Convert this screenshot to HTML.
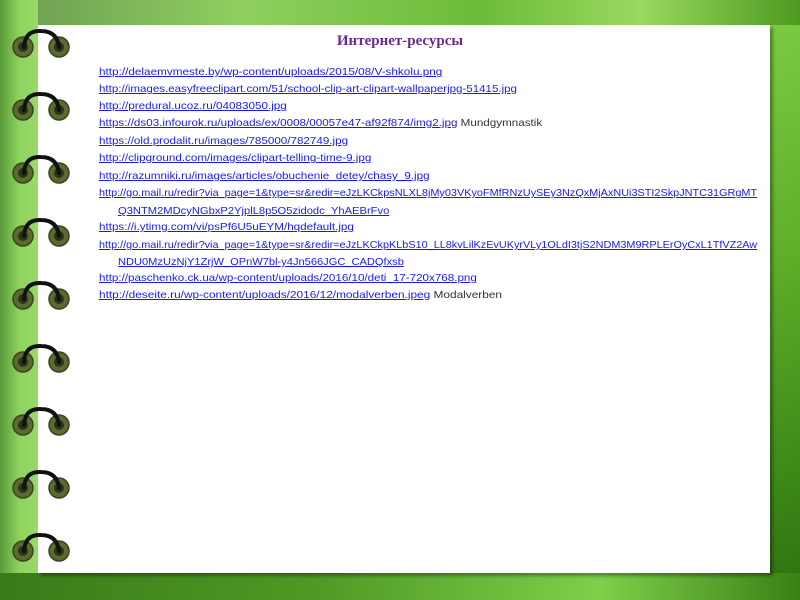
<!DOCTYPE html>
<html><head><meta charset="utf-8"><style>
html,body{margin:0;padding:0}
body{width:800px;height:600px;position:relative;overflow:hidden;
background:linear-gradient(160deg,#6fbf3c 0%,#7fcf45 30%,#5fb02a 60%,#3d8a18 85%,#2f7010 100%);font-family:"Liberation Sans",sans-serif}
.top{position:absolute;left:0;top:0;width:800px;height:25px;background:linear-gradient(90deg,#6a9a50,#8fcf60 30%,#6cbc38 60%,#9ad860 80%,#4e9a20)}
.lside{position:absolute;left:0;top:0;width:38px;height:600px;background:linear-gradient(90deg,#5a9a3a,#8ed35e 50%,#9ad86a)}
.bot{position:absolute;left:0;top:573px;width:800px;height:27px;background:linear-gradient(90deg,#3a7a18,#4f9a25 40%,#7ed04a 75%,#3a8015)}
.page{position:absolute;left:38px;top:25px;width:732px;height:548px;background:#fff;box-shadow:3px 3px 3px rgba(0,0,0,.35)}
.t{position:absolute;left:0;width:800px;top:33px;text-align:center;font:bold 15px "Liberation Serif",serif;color:#6a2a8c}
.l{position:absolute;left:99px;font-size:10.4px;white-space:nowrap;color:#333;transform-origin:0 0;transform:scaleX(1.12)}
.l span.a{color:#1a1aee;text-decoration:underline}
</style></head><body>
<div class="top"></div><div class="lside"></div><div class="bot"></div>
<div class="page"></div>
<svg style="position:absolute;left:0;top:0" width="90" height="600">
<g id="r">
<circle cx="23" cy="47" r="10" fill="#5a6a30" stroke="#3a4520" stroke-width="1.5"/>
<circle cx="23" cy="47" r="5" fill="#2a3515"/>
<circle cx="59" cy="47" r="10" fill="#5a6a30" stroke="#3a4520" stroke-width="1.5"/>
<circle cx="59" cy="47" r="5" fill="#2a3515"/>
<path d="M24 47 Q25 30 41 31 Q57 31 59 47" fill="none" stroke="#111" stroke-width="4" stroke-linecap="round"/>
</g>
<use href="#r" y="63"/><use href="#r" y="126"/><use href="#r" y="189"/><use href="#r" y="252"/><use href="#r" y="315"/><use href="#r" y="378"/><use href="#r" y="441"/><use href="#r" y="504"/>
</svg>
<div class="t">Интернет-ресурсы</div>
<div class="l" style="top:67px;transform:scaleX(1.13)"><span class="a">http://delaemvmeste.by/wp-content/uploads/2015/08/V-shkolu.png</span></div>
<div class="l" style="top:84px;transform:scaleX(1.11)"><span class="a">http://images.easyfreeclipart.com/51/school-clip-art-clipart-wallpaperjpg-51415.jpg</span></div>
<div class="l" style="top:101px;transform:scaleX(1.125)"><span class="a">http://predural.ucoz.ru/04083050.jpg</span></div>
<div class="l" style="top:118px"><span class="a">https://ds03.infourok.ru/uploads/ex/0008/00057e47-af92f874/img2.jpg</span> Mundgymnastik</div>
<div class="l" style="top:136px"><span class="a">https://old.prodalit.ru/images/785000/782749.jpg</span></div>
<div class="l" style="top:153px"><span class="a">http://clipground.com/images/clipart-telling-time-9.jpg</span></div>
<div class="l" style="top:171px"><span class="a">http://razumniki.ru/images/articles/obuchenie_detey/chasy_9.jpg</span></div>
<div class="l" style="top:188px;transform:scaleX(1.046)"><span class="a">http://go.mail.ru/redir?via_page=1&amp;type=sr&amp;redir=eJzLKCkpsNLXL8jMy03VKyoFMfRNzUySEy3NzQxMjAxNUi3STI2SkpJNTC31GRgMT</span></div>
<div class="l" style="top:206px;left:118px;transform:scaleX(1.075)"><span class="a">Q3NTM2MDcyNGbxP2YjplL8p5O5zidodc_YhAEBrFvo</span></div>
<div class="l" style="top:222px"><span class="a">https://i.ytimg.com/vi/psPf6U5uEYM/hqdefault.jpg</span></div>
<div class="l" style="top:240px;transform:scaleX(1.045)"><span class="a">http://go.mail.ru/redir?via_page=1&amp;type=sr&amp;redir=eJzLKCkpKLbS10_LL8kvLilKzEvUKyrVLy1OLdI3tjS2NDM3M9RPLErOyCxL1TfVZ2Aw</span></div>
<div class="l" style="top:257px;left:118px;transform:scaleX(1.067)"><span class="a">NDU0MzUzNjY1ZrjW_OPnW7bl-y4Jn566JGC_CADQfxsb</span></div>
<div class="l" style="top:273px;transform:scaleX(1.118)"><span class="a">http://paschenko.ck.ua/wp-content/uploads/2016/10/deti_17-720x768.png</span></div>
<div class="l" style="top:290px;transform:scaleX(1.14)"><span class="a">http://deseite.ru/wp-content/uploads/2016/12/modalverben.jpeg</span> Modalverben</div>
</body></html>
